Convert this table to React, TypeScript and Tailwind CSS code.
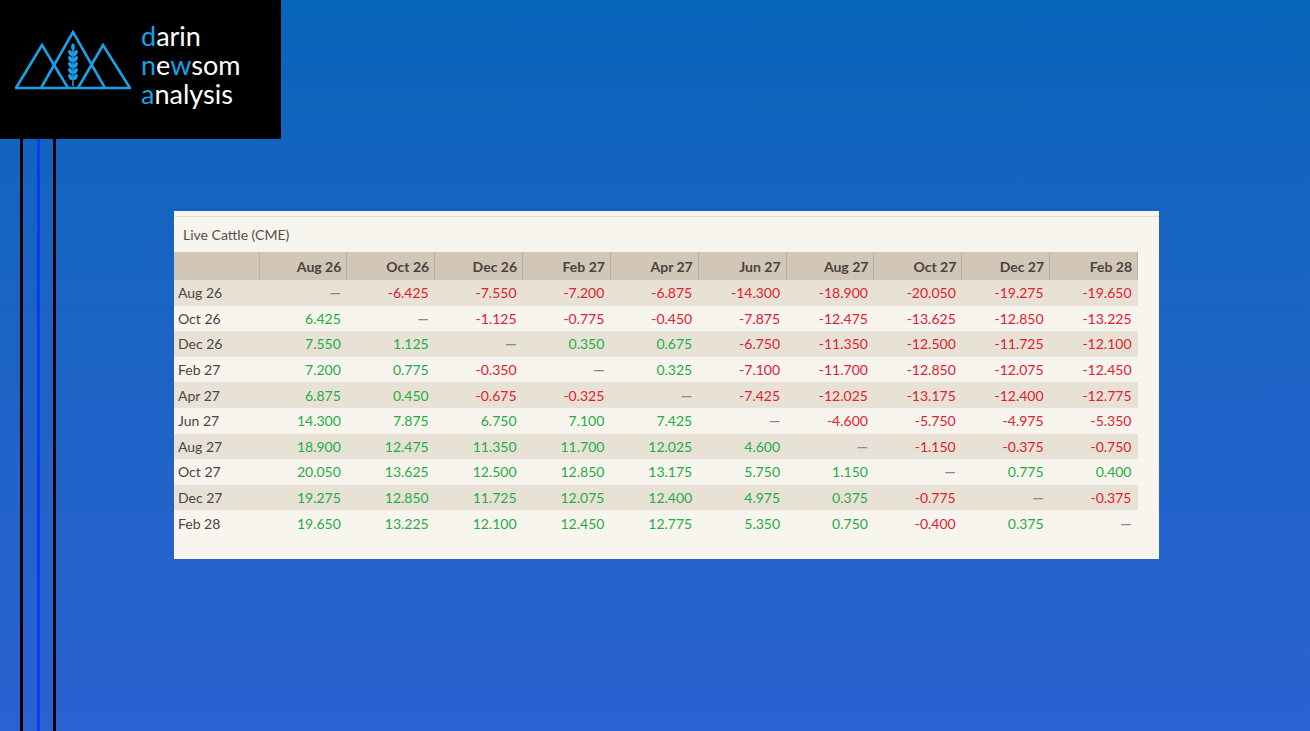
import React from "react";

const months = ["Aug 26", "Oct 26", "Dec 26", "Feb 27", "Apr 27", "Jun 27", "Aug 27", "Oct 27", "Dec 27", "Feb 28"];

// spread matrix: row minus column
const spreads: string[][] = [
  ["—", "-6.425", "-7.550", "-7.200", "-6.875", "-14.300", "-18.900", "-20.050", "-19.275", "-19.650"],
  ["6.425", "—", "-1.125", "-0.775", "-0.450", "-7.875", "-12.475", "-13.625", "-12.850", "-13.225"],
  ["7.550", "1.125", "—", "0.350", "0.675", "-6.750", "-11.350", "-12.500", "-11.725", "-12.100"],
  ["7.200", "0.775", "-0.350", "—", "0.325", "-7.100", "-11.700", "-12.850", "-12.075", "-12.450"],
  ["6.875", "0.450", "-0.675", "-0.325", "—", "-7.425", "-12.025", "-13.175", "-12.400", "-12.775"],
  ["14.300", "7.875", "6.750", "7.100", "7.425", "—", "-4.600", "-5.750", "-4.975", "-5.350"],
  ["18.900", "12.475", "11.350", "11.700", "12.025", "4.600", "—", "-1.150", "-0.375", "-0.750"],
  ["20.050", "13.625", "12.500", "12.850", "13.175", "5.750", "1.150", "—", "0.775", "0.400"],
  ["19.275", "12.850", "11.725", "12.075", "12.400", "4.975", "0.375", "-0.775", "—", "-0.375"],
  ["19.650", "13.225", "12.100", "12.450", "12.775", "5.350", "0.750", "-0.400", "0.375", "—"],
];

const Logo: React.FC = () => (
  <div className="relative w-[281px] h-[139px] bg-black shrink-0">
    <svg className="absolute left-[10px] top-[26px]" width="130" height="70" viewBox="10 26 130 70" fill="none">
      <g stroke="#1aa0e8" strokeWidth="2.6" strokeLinejoin="miter">
        <path d="M16 88 L42 45 L68 88" />
        <path d="M41 88 L73 32 L105 88" />
        <path d="M78 88 L103 45 L130 88" />
        <path d="M15 88 L131 88" />
        <path d="M73 50 L73 86" strokeWidth="1.6" />
      </g>
      <g fill="#1aa0e8">
        <ellipse cx="73" cy="47" rx="1.8" ry="3.4" />
        {[53, 59, 65, 71, 77].map((y) => (
          <g key={y}>
            <ellipse cx="70.5" cy={y} rx="1.9" ry="3.2" transform={`rotate(-30 70.5 ${y})`} />
            <ellipse cx="75.5" cy={y} rx="1.9" ry="3.2" transform={`rotate(30 75.5 ${y})`} />
          </g>
        ))}
      </g>
    </svg>
    <div className="absolute left-[141px] top-[21px] text-[27px] leading-[29px] font-normal text-white" style={{ fontFamily: "Lato, 'Open Sans', sans-serif" }}>
      <div><span className="text-[#1aa0e8]">d</span>arin</div>
      <div><span className="text-[#1aa0e8]">n</span>e<span className="text-[#1aa0e8]">w</span>som</div>
      <div><span className="text-[#1aa0e8]">a</span>nalysis</div>
    </div>
  </div>
);

const valueColor = (v: string) => {
  if (v === "—") return "text-[#8a8a8a] text-[12px] font-bold";
  if (v.startsWith("-")) return "text-[#e1202f]";
  return "text-[#1fae45]";
};

const SpreadTable: React.FC = () => (
  <div className="w-[985px] h-[348px] bg-[#f8f4ee] pt-[5px]" style={{ fontFamily: "Lato, 'Liberation Sans', sans-serif" }}>
    <div className="border-t border-[#e2ddd5] h-[36px] flex items-center pl-[9px] text-[14px] text-[#555049]">
      Live Cattle (CME)
    </div>
    <table className="w-[964px] border-collapse table-fixed">
      <colgroup>
        <col className="w-[85px]" />
        {months.map((m) => (
          <col key={m} />
        ))}
      </colgroup>
      <thead>
        <tr className="h-[28px] bg-[#d2c6b6]">
          <th className="border-r border-[#bdb1a1]" />
          {months.map((m) => (
            <th key={m} className="border-r border-[#bdb1a1] text-right pr-[5px] text-[14px] font-bold text-[#48443f]">
              {m}
            </th>
          ))}
        </tr>
      </thead>
      <tbody>
        {spreads.map((row, i) => (
          <tr key={months[i]} className={`h-[25.6px] ${i % 2 === 0 ? "bg-[#e8e2d6]" : "bg-[#f8f4ee]"}`}>
            <td className="pl-[4px] text-[14px] text-[#4a4540]">{months[i]}</td>
            {row.map((v, j) => (
              <td key={j} className={`text-right pr-[6px] text-[14px] ${valueColor(v)}`}>
                {v}
              </td>
            ))}
          </tr>
        ))}
      </tbody>
    </table>
  </div>
);

export default function App() {
  return (
    <div className="w-full h-[731px] overflow-hidden bg-linear-to-b from-[#0664bb] to-[#2a62d1] flex flex-col">
      <Logo />
      <div className="flex flex-1">
        <div className="w-[174px] shrink-0 flex pl-[20px]">
          <div className="w-[3px] bg-black" />
          <div className="w-[3px] bg-[#0b3af2] ml-[14px]" />
          <div className="w-[3px] bg-black ml-[13px]" />
        </div>
        <div className="pt-[72px]">
          <SpreadTable />
        </div>
      </div>
    </div>
  );
}
